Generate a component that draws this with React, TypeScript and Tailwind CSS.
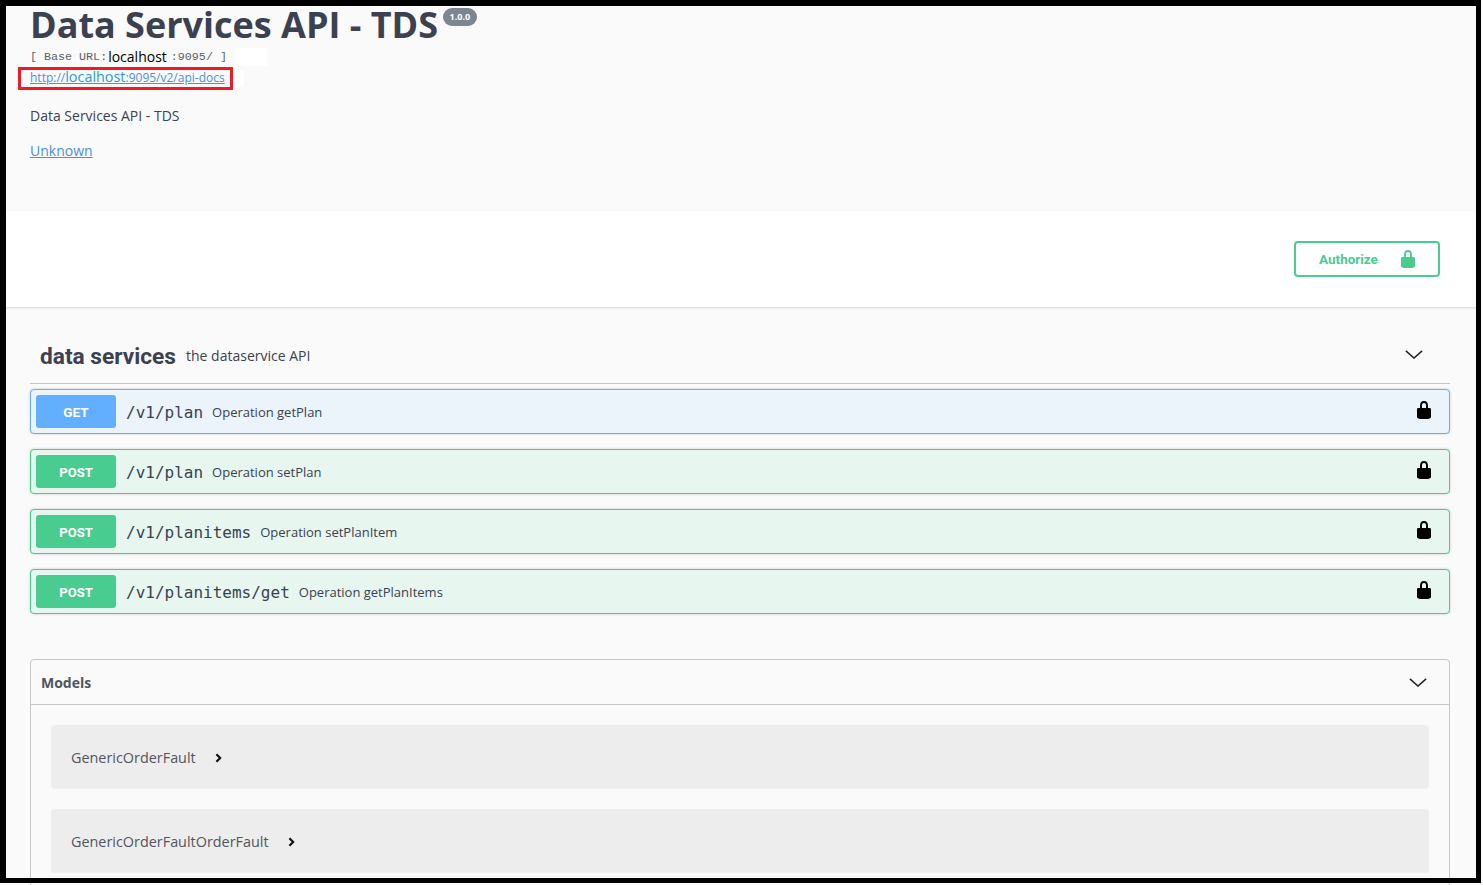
import { ReactNode } from 'react';

const sans = 'font-["Open_Sans",sans-serif]';
const titillium = 'font-["Roboto",sans-serif]';

const Lock = ({ className }: { className: string }) => (
  <svg viewBox="0 0 20 20" className={className} fill="currentColor">
    <path d="M15.8 8H14V5.6C14 2.703 12.665 1 10 1 7.334 1 6 2.703 6 5.6V8H4c-.553 0-1 .646-1 1.199V17c0 .549.428 1.139.951 1.307l1.197.387C5.672 18.861 6.55 19 7.1 19h5.800c.549 0 1.428-.139 1.951-.307l1.196-.387c.524-.167.953-.757.953-1.306V9.199C17 8.646 16.352 8 15.800 8zM12 8H8V5.199C8 3.754 8.797 3 10 3c1.203 0 2 .754 2 2.199V8z" />
  </svg>
);

const ChevronDown = () => (
  <svg viewBox="0 0 20 10" className="w-[18px] h-[9px]" fill="none" stroke="#1f2328" strokeWidth="1.6">
    <path d="M1 1l9 8 9-8" />
  </svg>
);

const ChevronRight = () => (
  <svg viewBox="0 0 8 12" className="w-[7px] h-[10px]" fill="none" stroke="#111" strokeWidth="2.6">
    <path d="M1.500 1.500L6 6l-4.500 4.500" />
  </svg>
);

type Op = { method: string; path: string; summary: string };

const ops: Op[] = [
  { method: 'GET', path: '/v1/plan', summary: 'Operation getPlan' },
  { method: 'POST', path: '/v1/plan', summary: 'Operation setPlan' },
  { method: 'POST', path: '/v1/planitems', summary: 'Operation setPlanItem' },
  { method: 'POST', path: '/v1/planitems/get', summary: 'Operation getPlanItems' },
];

const OpRow = ({ op }: { op: Op }) => {
  const isGet = op.method === 'GET';
  return (
    <div
      className={`flex items-center h-[45px] rounded-[4px] border pl-[5px] pr-[15px] shadow-[0_0_3px_rgba(0,0,0,0.19)] ${
        isGet ? 'border-[#61affe] bg-[#ebf3fb]' : 'border-[#49cc90] bg-[#e7f6ef]'
      }`}
    >
      <div
        className={`w-[80px] h-[33px] rounded-[3px] flex items-center justify-center text-white font-bold ${titillium} ${
          isGet ? 'pt-[1px] text-[13.500px] bg-[#61affe]' : 'pt-[2px] text-[13px] bg-[#49cc90]'
        }`}
      >
        {op.method}
      </div>
      <span className='ml-[10px] pt-[3px] font-["DejaVu_Sans_Mono",monospace] text-[16px] text-[#3b4151]'>{op.path}</span>
      <span className={`ml-[9px] pt-[3px] text-[13px] text-[#3b4151] ${sans}`}>{op.summary}</span>
      <Lock className="ml-auto mb-[3px] w-[20px] h-[20px] text-black" />
    </div>
  );
};

const ModelRow = ({ children }: { children: ReactNode }) => (
  <div className="flex items-center h-[64px] rounded-[4px] bg-[#ededed] px-[20px]">
    <span className={`pt-[2px] text-[14.400px] text-[#505560] ${sans}`}>{children}</span>
    <span className="ml-[19px] mt-[2px] flex">
      <ChevronRight />
    </span>
  </div>
);

export default function App() {
  return (
    <div className="h-[885px] bg-[#fafafa] overflow-hidden">
      <div className={`h-[883px] w-[1481px] border-black border-t-[6px] border-l-[6px] border-r-[5px] border-b-[5px] bg-[#fafafa] overflow-hidden ${sans}`}>
        <div className="h-[205px] pl-[24px] flex flex-col text-[#3b4151]">
          <div className="-mt-[3px] flex items-start h-[44px]">
            <h1 className="text-[36px] leading-[44px] font-bold">Data Services API - TDS</h1>
            <span className="ml-[5px] mt-[5px] h-[18px] px-[6.500px] rounded-[9px] bg-[#7d8492] text-white text-[9px] font-bold leading-[18px]">1.0.0</span>
          </div>
          <div className="h-[19px] flex items-center text-[11.700px] text-[#5b5f68] font-['Liberation_Mono',monospace] whitespace-pre">
            <span className="pt-[2px]">[ Base URL:</span>
            <span className={`ml-[1px] text-[14px] text-black ${sans}`}>localhost</span>
            <span className="ml-[4px] pt-[2px]">:9095/ ]</span>
            <span className="ml-[8px] w-[32px] h-[18px] bg-white" />
          </div>
          <div className="mt-[1px] flex items-center h-[23px]">
            <div className="-ml-[12px] h-[23px] w-[215px] border-[3px] border-[#ed1c24] flex items-center pl-[9px] pb-[3px]">
              <a className="text-[12px] text-[#4990e2] underline whitespace-pre">
                http://<span className="text-[14.400px] text-[#1a9fe0]">localhost</span>:9095/v2/api-docs
              </a>
            </div>
            <span className="w-[11px] h-[16px] bg-white" />
          </div>
          <p className="mt-[16px] text-[14px] leading-[20px]">Data Services API - TDS</p>
          <a className="block mt-[15px] text-[14px] leading-[20px] text-[#4990e2] underline">Unknown</a>
        </div>

        <div className="h-[96px] bg-white shadow-[0_1px_2px_rgba(0,0,0,0.15)] flex items-center justify-end pr-[36px]">
          <button className={`w-[146px] h-[36px] rounded-[4px] border-[2px] border-[#49cc90] flex items-center pl-[23px] text-[#49cc90] text-[13.500px] font-bold ${titillium}`}>
            Authorize
            <Lock className="ml-[20px] w-[20px] h-[20px]" />
          </button>
        </div>

        <div className="pl-[24px] pr-[26px]">
          <div className="mt-[27px] h-[50px] flex items-center border-b border-[#c6c6c8] pl-[10px] pr-[27px] pb-[2px] text-[#3b4151]">
            <span className={`text-[22.700px] font-bold ${titillium}`}>data services</span>
            <span className={`ml-[10px] -mt-[4px] text-[14px] ${sans}`}>the dataservice API</span>
            <span className="ml-auto mb-[6px] flex">
              <ChevronDown />
            </span>
          </div>
          <div className="mt-[5px] flex flex-col gap-[15px]">
            {ops.map((op) => (
              <OpRow key={op.path + op.method} op={op} />
            ))}
          </div>
          <div className="mt-[45px] h-[300px] border border-[#c6c6c8] rounded-[4px]">
            <div className="h-[45px] flex items-center justify-between border-b border-[#c6c6c8] pl-[10px] pr-[22px]">
              <span className={`text-[14px] font-bold text-[#505560] ${sans}`}>Models</span>
              <span className="flex">
                <ChevronDown />
              </span>
            </div>
            <div className="px-[20px] pt-[20px] flex flex-col gap-[20px]">
              <ModelRow>GenericOrderFault</ModelRow>
              <ModelRow>GenericOrderFaultOrderFault</ModelRow>
            </div>
          </div>
        </div>
      </div>
      <div className="ml-[30px] w-[1420px] h-[2px] border-x border-[#c6c6c8]" />
    </div>
  );
}
